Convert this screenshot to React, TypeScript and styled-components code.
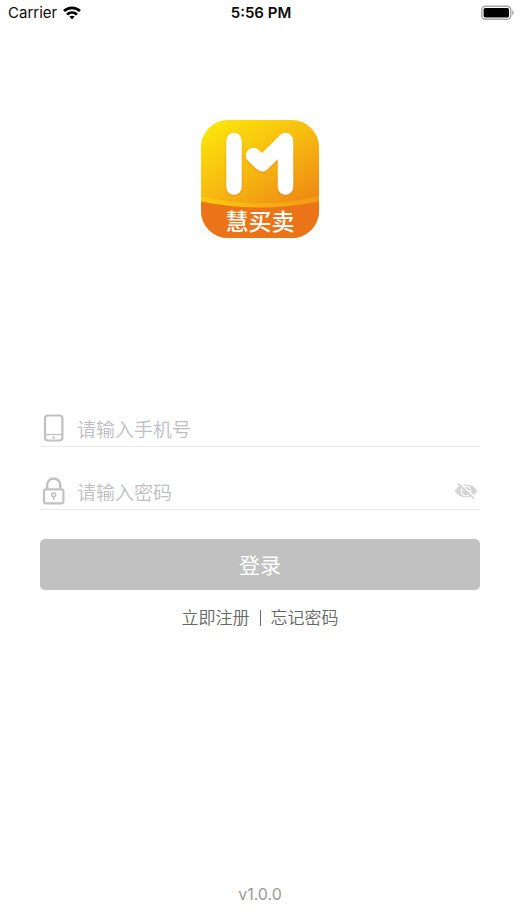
import React, { useState } from "react";
import styled, { createGlobalStyle } from "styled-components";

const GlobalStyle = createGlobalStyle`
  * { box-sizing: border-box; }
  body {
    margin: 0;
    background: #fff;
    font-family: Inter, "Noto Sans CJK SC", sans-serif;
  }
`;

const Screen = styled.div`
  display: flex;
  flex-direction: column;
  min-height: 100vh;
`;

const StatusBar = styled.header`
  display: grid;
  grid-template-columns: 1fr auto 1fr;
  align-items: center;
  height: 26px;
  padding: 0 6px 0 8px;
  font-size: 15px;
  line-height: 26px;
  color: #0a0a0a;
`;

const Carrier = styled.div`
  display: flex;
  align-items: center;
  gap: 6px;
`;

const Clock = styled.time`
  font-weight: 600;
`;

const BatterySlot = styled.div`
  display: flex;
  justify-content: flex-end;
`;

const Content = styled.main`
  display: flex;
  flex-direction: column;
  flex: 1;
  padding: 94px 40px 0;
`;

const Logo = styled.svg`
  display: block;
  align-self: center;
  width: 118px;
  height: 118px;
`;

const LogoText = styled.text`
  font-family: "Noto Sans CJK SC", sans-serif;
  font-size: 23px;
  font-weight: 500;
`;

const Form = styled.form`
  display: flex;
  flex-direction: column;
  padding-top: 171px;
`;

const Field = styled.div<{ $spaced?: boolean }>`
  display: flex;
  align-items: center;
  height: 38px;
  margin-top: ${(p) => (p.$spaced ? 25 : 0)}px;
  border-bottom: 1px solid #ececec;
`;

const FieldLabel = styled.label`
  display: flex;
  width: 37px;
`;

const Input = styled.input`
  flex: 1;
  min-width: 0;
  height: 36px;
  padding: 5px 0 0;
  border: 0;
  outline: 0;
  background: transparent;
  color: #333;
  font-family: Inter, "Noto Sans CJK SC", sans-serif;
  font-size: 19px;
  font-weight: 350;
  &::placeholder {
    color: #bebec3;
    opacity: 1;
  }
`;

const IconButton = styled.button`
  display: flex;
  padding: 0 2px;
  border: 0;
  background: none;
  cursor: pointer;
`;

const LoginButton = styled.button`
  height: 51px;
  margin-top: 29px;
  padding: 0 0 2px;
  border: 0;
  border-radius: 5px;
  background: #c1c1c1;
  color: #fff;
  font-family: Inter, "Noto Sans CJK SC", sans-serif;
  font-size: 21px;
`;

const Links = styled.nav`
  display: flex;
  align-items: center;
  justify-content: center;
  gap: 10px;
  margin-top: 15px;
  line-height: 26px;
`;

const TextLink = styled.a`
  color: #666;
  font-size: 17px;
  font-weight: 350;
  text-decoration: none;
`;

const Divider = styled.span`
  width: 1px;
  height: 16px;
  background: #666;
`;

const Version = styled.footer`
  padding-bottom: 18px;
  color: #999;
  font-size: 16px;
  line-height: 24px;
  text-align: center;
`;

const WifiIcon = () => (
  <svg width="18" height="14" viewBox="0 0 18 14" aria-hidden="true" fill="none" stroke="#000" strokeWidth="2.7">
    <path d="M1 5C5.6.7 12.4.7 17 5" />
    <path d="M4 8.5c2.9-2.6 7.1-2.6 10 0" />
    <path d="M6.4 10.6c1.5-1.2 3.7-1.2 5.2 0L9 13.4z" fill="#000" stroke="none" />
  </svg>
);

const BatteryIcon = () => (
  <svg width="34" height="16" viewBox="0 0 34 16" role="img" aria-label="Battery full">
    <rect x="1.8" y="1.2" width="29" height="13" rx="3.6" fill="none" stroke="#a5a5a5" strokeWidth="1.4" />
    <rect x="3.6" y="3" width="25.4" height="9.4" rx="1.6" fill="#000" />
    <path d="M32.2 5.5v4.6c1.7-.6 1.7-4 0-4.6z" fill="#929292" />
  </svg>
);

const PhoneIcon = () => (
  <svg width="26" height="28" viewBox="0 0 26 28" aria-hidden="true" fill="none" stroke="#c1c1c1" strokeWidth="2.2">
    <rect x="5" y="1.5" width="17.4" height="25" rx="3" />
    <path d="M5 20.5h17.4" strokeWidth="1.4" />
    <circle cx="13.7" cy="23.5" r="1.3" fill="#c1c1c1" stroke="none" />
  </svg>
);

const LockIcon = () => (
  <svg width="26" height="28" viewBox="0 0 26 28" aria-hidden="true" fill="none" stroke="#c1c1c1" strokeWidth="2.2">
    <rect x="4" y="12.3" width="19.4" height="14" rx="2" />
    <path d="M7.2 12.3V8a6.5 6.5 0 0 1 13 0v4.3" strokeWidth="2.4" />
    <circle cx="13.7" cy="17.8" r="2" strokeWidth="1.5" />
    <path d="M13.7 19.8v3.4" strokeWidth="1.5" />
  </svg>
);

const EyeOffIcon = () => (
  <svg width="24" height="18" viewBox="0 0 24 18" aria-hidden="true" fill="none">
    <path d="M.8 9C5.5.4 18.5.4 23.2 9 18.5 17.6 5.5 17.6.8 9z" fill="#d4d4d4" />
    <circle cx="12" cy="9" r="4.8" stroke="#fff" strokeWidth="1.2" />
    <path d="M9.6 9A2.4 2.4 0 0 1 12 6.6" stroke="#fff" strokeWidth="1" />
    <path d="M5.2 1.2l15 14.6" stroke="#fff" strokeWidth="3" />
    <path d="M4.6 1.7l15 14.6" stroke="#cdcdcd" strokeWidth="1.4" strokeLinecap="round" />
  </svg>
);

const AppLogo = () => (
  <Logo viewBox="0 0 118 118" role="img" aria-label="慧买卖">
    <defs>
      <linearGradient id="face" gradientUnits="userSpaceOnUse" x1="12" y1="0" x2="82" y2="112">
        <stop offset="0" stopColor="#fce70a" />
        <stop offset=".45" stopColor="#f7bb10" />
        <stop offset="1" stopColor="#ec8014" />
      </linearGradient>
      <linearGradient id="rim" x1="0" y1="0" x2="1" y2="0">
        <stop offset="0" stopColor="#fccb0c" />
        <stop offset=".55" stopColor="#f6ae12" />
        <stop offset="1" stopColor="#f09a17" />
      </linearGradient>
      <clipPath id="tile"><rect width="118" height="118" rx="27" /></clipPath>
      <filter id="shade" x="-20%" y="-20%" width="140%" height="140%">
        <feDropShadow dx="0" dy="1" stdDeviation="1.2" floodColor="#df7300" floodOpacity=".55" />
      </filter>
    </defs>
    <g clipPath="url(#tile)">
      <rect width="118" height="118" fill="url(#face)" />
      <path d="M0 76q59 15 118 0v10q-59 6-118 0z" fill="url(#rim)" />
      <path d="M0 81.5q59 12 118 0V118H0z" fill="#eb7318" />
    </g>
    <g filter="url(#shade)" fill="none" stroke="#fff" strokeWidth="15.4" strokeLinecap="round" strokeLinejoin="round">
      <path d="M33 20.5V67" />
      <path d="M52.5 35.5l8.7 8.2L84.5 20.5V67" />
    </g>
    <LogoText x="59" y="110" textAnchor="middle" fill="#fff">慧买卖</LogoText>
  </Logo>
);

export default function App() {
  const [visible, setVisible] = useState(false);
  return (
    <>
      <GlobalStyle />
      <Screen>
        <StatusBar>
          <Carrier>Carrier <WifiIcon /></Carrier>
          <Clock>5:56 PM</Clock>
          <BatterySlot><BatteryIcon /></BatterySlot>
        </StatusBar>
        <Content>
          <AppLogo />
          <Form onSubmit={(e) => e.preventDefault()}>
            <Field>
              <FieldLabel htmlFor="phone" aria-label="手机号"><PhoneIcon /></FieldLabel>
              <Input id="phone" type="tel" placeholder="请输入手机号" />
            </Field>
            <Field $spaced>
              <FieldLabel htmlFor="password" aria-label="密码"><LockIcon /></FieldLabel>
              <Input id="password" type={visible ? "text" : "password"} placeholder="请输入密码" />
              <IconButton type="button" aria-label="显示密码" onClick={() => setVisible(!visible)}>
                <EyeOffIcon />
              </IconButton>
            </Field>
            <LoginButton type="submit">登录</LoginButton>
          </Form>
          <Links>
            <TextLink href="#register">立即注册</TextLink>
            <Divider />
            <TextLink href="#forgot">忘记密码</TextLink>
          </Links>
        </Content>
        <Version>v1.0.0</Version>
      </Screen>
    </>
  );
}
